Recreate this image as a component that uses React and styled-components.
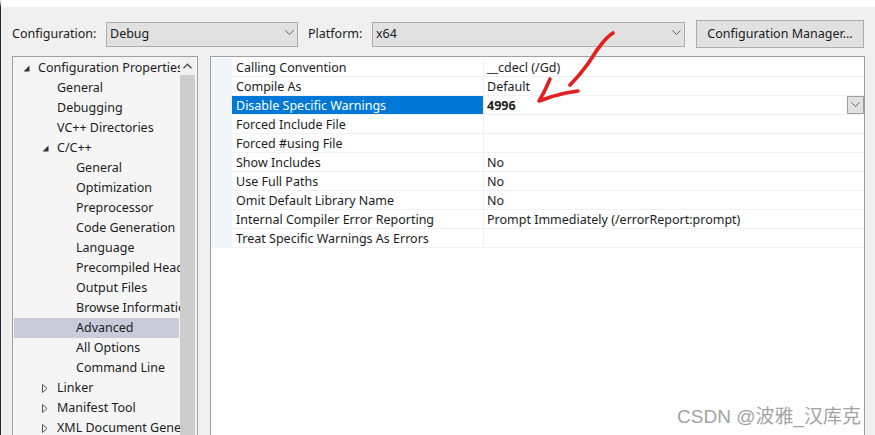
import React from "react";
import styled, { createGlobalStyle } from "styled-components";

const GlobalStyle = createGlobalStyle`
  html, body {
    margin: 0;
    padding: 0;
    background: #f0f0f0;
  }
  * {
    box-sizing: border-box;
  }
`;

const Page = styled.div`
  position: relative;
  width: 875px;
  height: 435px;
  overflow: hidden;
  display: flex;
  flex-direction: column;
  background: #f0f0f0;
  border-top: 7px solid #fff;
  border-left: 1px solid #1d2730;
  font-family: "Noto Sans", "Liberation Sans", sans-serif;
  font-size: 12.5px;
  line-height: 17px;
  color: #1c1c1c;
`;

const Toolbar = styled.div`
  display: flex;
  align-items: center;
  height: 41px;
  padding: 13px 11px 0 11px;
  flex-shrink: 0;
`;

const Label = styled.label`
  width: ${(p) => p.$width}px;
  padding-bottom: 2px;
  white-space: nowrap;
`;

const Combo = styled.div`
  display: flex;
  align-items: center;
  justify-content: space-between;
  width: ${(p) => p.$width}px;
  height: 25px;
  margin-right: ${(p) => p.$gap}px;
  padding: 0 3px 2px 3px;
  background: #e1e1e1;
  border: 1px solid #adadad;
`;

const ManagerButton = styled.button`
  width: 168px;
  height: 28px;
  padding: 0 0 2px;
  background: #e1e1e1;
  border: 1px solid #adadad;
  font: inherit;
  color: inherit;
`;

const Panels = styled.div`
  flex: 1;
  min-height: 0;
  display: flex;
  gap: 12px;
  margin-top: 8px;
  padding: 0 10px 0 11px;
`;

const TreePanel = styled.div`
  display: flex;
  width: 186px;
  background: #f5f5f5;
  border: 1px solid #a0a0a0;
  border-bottom: none;
  padding-right: 2px;
`;

const TreeList = styled.ul`
  flex: 1;
  min-width: 0;
  margin: 0;
  padding: 1px 0 0;
  list-style: none;
  overflow: hidden;
`;

const TreeRow = styled.li`
  display: flex;
  align-items: center;
  height: 20px;
  margin: 0 1px;
  padding: 0 0 2px ${(p) => p.$level * 19 + 5}px;
  white-space: nowrap;
  background: ${(p) => (p.$selected ? "#c9cbda" : "transparent")};
`;

const CaretBox = styled.span`
  display: flex;
  align-items: center;
  flex-shrink: 0;
  width: 19px;
  margin-top: 2px;
  padding-left: 4px;
`;

const ScrollTrack = styled.div`
  display: flex;
  flex-direction: column;
  flex-shrink: 0;
  width: 15px;
  background: #f0f0f0;
`;

const ScrollUp = styled.div`
  display: flex;
  align-items: center;
  justify-content: center;
  height: 18px;
`;

const ScrollThumb = styled.div`
  flex: 1;
  background: #cdcdcd;
`;

const GridPanel = styled.div`
  flex: 1;
  min-width: 0;
  background: #fff;
  border: 1px solid #a0a0a0;
  border-bottom: none;
  padding-top: 1px;
`;

const GridRow = styled.div`
  display: grid;
  grid-template-columns: 21px 251px 1fr;
  height: 19px;
`;

const Gutter = styled.div`
  background: #f0f4fb;
`;

const NameCell = styled.div`
  display: flex;
  align-items: center;
  height: 18px;
  padding-left: 4px;
  white-space: nowrap;
  background: ${(p) => (p.$selected ? "#0078d7" : "#fff")};
  color: ${(p) => (p.$selected ? "#fff" : "inherit")};
  box-shadow: 0 1px 0 #f0f0f6;
`;

const ValueCell = styled.div`
  display: flex;
  align-items: center;
  justify-content: space-between;
  height: 18px;
  padding-left: 3px;
  white-space: nowrap;
  border-left: 1px solid #f0f0f6;
  box-shadow: 0 1px 0 #f0f0f6;
  font-weight: ${(p) => (p.$bold ? 700 : 400)};
`;

const CellDrop = styled.div`
  display: flex;
  align-items: center;
  justify-content: center;
  width: 17px;
  height: 18px;
  background: #e1e1e1;
  border: 1px solid #a0a0a0;
`;

const ArrowMark = styled.svg`
  position: absolute;
  left: 529px;
  top: 18px;
  width: 95px;
  height: 85px;
  pointer-events: none;
`;

const Watermark = styled.div`
  position: absolute;
  right: 14px;
  bottom: 6px;
  font-family: "Liberation Sans", "Noto Sans CJK SC", sans-serif;
  font-size: 19px;
  line-height: 24px;
  color: #a3a3a3;
  white-space: nowrap;
`;

const Chevron = ({ size = 9, color = "#606060" }) => (
  <svg width={size} height={size * 0.6} viewBox="0 0 10 6" fill="none">
    <path d="M0.5 0.5 L5 5 L9.5 0.5" stroke={color} strokeWidth="1.1" />
  </svg>
);

const Caret = ({ open }) =>
  open ? (
    <svg width="7" height="7" viewBox="0 0 7 7">
      <polygon points="6.5,0.5 6.5,6.5 0.5,6.5" fill="#333" />
    </svg>
  ) : (
    <svg width="6" height="9" viewBox="0 0 6 9" fill="none">
      <path d="M0.5 0.5 L5 4.5 L0.5 8.5 Z" stroke="#555" strokeWidth="1" />
    </svg>
  );

const treeItems = [
  { label: "Configuration Properties", level: 0, caret: "open" },
  { label: "General", level: 1 },
  { label: "Debugging", level: 1 },
  { label: "VC++ Directories", level: 1 },
  { label: "C/C++", level: 1, caret: "open" },
  { label: "General", level: 2 },
  { label: "Optimization", level: 2 },
  { label: "Preprocessor", level: 2 },
  { label: "Code Generation", level: 2 },
  { label: "Language", level: 2 },
  { label: "Precompiled Headers", level: 2 },
  { label: "Output Files", level: 2 },
  { label: "Browse Information", level: 2 },
  { label: "Advanced", level: 2, selected: true },
  { label: "All Options", level: 2 },
  { label: "Command Line", level: 2 },
  { label: "Linker", level: 1, caret: "closed" },
  { label: "Manifest Tool", level: 1, caret: "closed" },
  { label: "XML Document Generator", level: 1, caret: "closed" },
];

const properties = [
  { name: "Calling Convention", value: "__cdecl (/Gd)" },
  { name: "Compile As", value: "Default" },
  { name: "Disable Specific Warnings", value: "4996", selected: true },
  { name: "Forced Include File", value: "" },
  { name: "Forced #using File", value: "" },
  { name: "Show Includes", value: "No" },
  { name: "Use Full Paths", value: "No" },
  { name: "Omit Default Library Name", value: "No" },
  { name: "Internal Compiler Error Reporting", value: "Prompt Immediately (/errorReport:prompt)" },
  { name: "Treat Specific Warnings As Errors", value: "" },
];

export default function App() {
  return (
    <>
      <GlobalStyle />
      <Page>
        <Toolbar>
          <Label $width={94}>Configuration:</Label>
          <Combo $width={192} $gap={10}>
            <span>Debug</span>
            <Chevron />
          </Combo>
          <Label $width={64}>Platform:</Label>
          <Combo $width={313} $gap={11}>
            <span>x64</span>
            <Chevron />
          </Combo>
          <ManagerButton>Configuration Manager...</ManagerButton>
        </Toolbar>
        <Panels>
          <TreePanel>
            <TreeList>
              {treeItems.map((item, index) => (
                <TreeRow key={index} $level={item.level} $selected={item.selected}>
                  <CaretBox>{item.caret && <Caret open={item.caret === "open"} />}</CaretBox>
                  {item.label}
                </TreeRow>
              ))}
            </TreeList>
            <ScrollTrack>
              <ScrollUp>
                <svg width="9" height="6" viewBox="0 0 10 6" fill="none">
                  <path d="M0.5 5.5 L5 1 L9.5 5.5" stroke="#505050" strokeWidth="1.6" />
                </svg>
              </ScrollUp>
              <ScrollThumb />
            </ScrollTrack>
          </TreePanel>
          <GridPanel>
            {properties.map((prop) => (
              <GridRow key={prop.name}>
                <Gutter />
                <NameCell $selected={prop.selected}>{prop.name}</NameCell>
                <ValueCell $bold={prop.selected}>
                  <span>{prop.value}</span>
                  {prop.selected && (
                    <CellDrop>
                      <Chevron />
                    </CellDrop>
                  )}
                </ValueCell>
              </GridRow>
            ))}
          </GridPanel>
        </Panels>
        <ArrowMark viewBox="530 25 95 85" fill="none">
          <path
            d="M613 33 C605 38 601 45 597 50 C593 56 590 61 587 65 C582 72 576 79 570 85"
            stroke="#e2201f"
            strokeWidth="3.8"
            strokeLinecap="round"
          />
          <path
            d="M550 79 C547 85 546 90 539 101 C546 99 552 96 558 95 C564 93 571 92 578 91"
            stroke="#e2201f"
            strokeWidth="3.6"
            strokeLinecap="round"
            strokeLinejoin="round"
          />
        </ArrowMark>
        <Watermark>CSDN @波雅_汉库克</Watermark>
      </Page>
    </>
  );
}
